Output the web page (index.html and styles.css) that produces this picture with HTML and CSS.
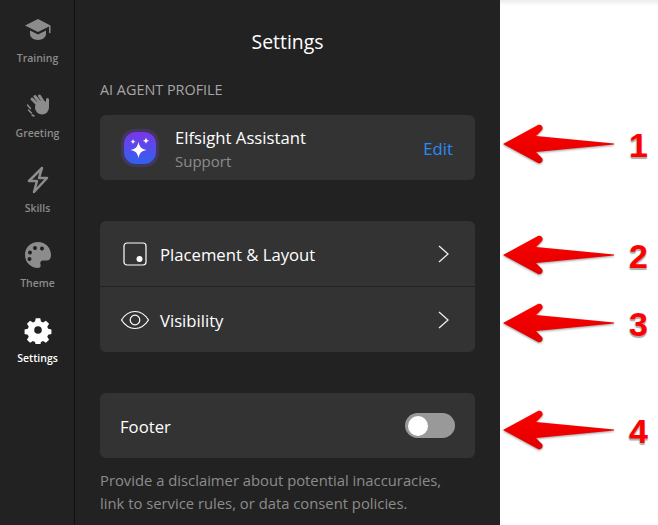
FILE: index.html
```html
<!DOCTYPE html>
<html lang="en">
	<head>
		<meta charset="UTF-8" />
		<title>Settings</title>
		<link rel="stylesheet" href="styles.css">
	</head>
	<body>
		<nav class="sidebar">
			<div class="nav-item">
				<svg class="nav-icon" viewBox="0 0 28 28"><path d="M14 3 1 9.500 14 16l11-5.500V17h1.500V9.500z"/><path d="M6 14.500V18c0 3 3.500 6 8 6s8-3 8-6v-3.500l-8 4z"/></svg>
				<span>Training</span>
			</div>
			<div class="nav-item">
				<svg class="nav-icon" viewBox="0 0 28 28"><circle cx="18" cy="16.500" r="7"/><path d="M15 15 8 8M17 13l-6-7.500M20 12l-4.500-7M23.500 15V8.500" fill="none" stroke="#8c8c8c" stroke-width="3" stroke-linecap="round"/><path d="M3.500 14l3 3.500M4.500 19l3 3M8 24l2 1" fill="none" stroke="#8c8c8c" stroke-width="1.500" stroke-linecap="round"/></svg>
				<span>Greeting</span>
			</div>
			<div class="nav-item">
				<svg class="nav-icon" viewBox="0 0 28 28"><path d="M18 2 5 15h8l-3 11 13-14h-8z" fill="none" stroke="#8c8c8c" stroke-width="2.500" stroke-linejoin="round"/></svg>
				<span>Skills</span>
			</div>
			<div class="nav-item">
				<svg class="nav-icon" viewBox="0 0 28 28"><path fill-rule="evenodd" d="M14 1C6.500 1 1 6.500 1 14s6 13 13 13c2.500 0 3-2 2.500-3.500-.8-2 .3-4 2.500-4h3.500c2.800 0 4.500-2 4.500-5C27 6.500 21.500 1 14 1zM8 11.500a2 2 0 1 0 0 .1zM13 7a2 2 0 1 0 0 .1zM20 7.500a2 2 0 1 0 0 .1zM7.500 18a2 2 0 1 0 0 .1z"/></svg>
				<span>Theme</span>
			</div>
			<div class="nav-item active">
				<svg class="nav-icon" viewBox="0 0 28 28"><path fill-rule="evenodd" d="M11.500 1h5l.8 3.600 2.300 1 3.200-2 3.500 3.500-2 3.200 1 2.300 3.600.8v5l-3.600.8-1 2.300 2 3.200-3.500 3.500-3.200-2-2.300 1-.8 3.600h-5l-.8-3.600-2.300-1-3.200 2-3.500-3.500 2-3.200-1-2.300-3.600-.8v-5l3.600-.8 1-2.300-2-3.200 3.500-3.500 3.200 2 2.300-1z" transform="translate(1.400 1.400) scale(.9)"/><circle cx="14" cy="14" r="3.800" fill="#222"/></svg>
				<span>Settings</span>
			</div>
		</nav>

		<main class="panel">
			<h1 class="panel-title">Settings</h1>
			<h2 class="section-label">AI AGENT PROFILE</h2>
			<div class="card profile">
				<div class="avatar">
					<svg viewBox="0 0 40 40">
						<defs><linearGradient id="av" x1="0" y1="0" x2="0" y2="1"><stop offset="0" stop-color="#7b35e8"/><stop offset="1" stop-color="#2f62ee"/></linearGradient></defs>
						<rect x="1" y="1" width="38" height="38" rx="14" fill="#5b3ea8" opacity=".35"/>
						<rect x="4" y="4" width="32" height="32" rx="12" fill="url(#av)"/>
						<path d="M18.500 13.500c.9 5.500 2.800 7.600 8 8.500-5.200.9-7.100 3-8 8.500-.9-5.500-2.800-7.600-8-8.500 5.200-.9 7.100-3 8-8.500z" fill="#fff"/>
						<path d="M13 11c.3 1.700 1 2.400 2.700 2.700-1.700.3-2.400 1-2.700 2.700-.3-1.700-1-2.400-2.700-2.700 1.700-.3 2.400-1 2.700-2.700zM26 9.500c.4 2.100 1.200 2.900 3.300 3.300-2.100.4-2.900 1.200-3.300 3.300-.4-2.100-1.200-2.900-3.300-3.300 2.100-.4 2.900-1.200 3.300-3.300z" fill="#fff"/>
					</svg>
				</div>
				<div class="profile-text">
					<div class="profile-name">Elfsight Assistant</div>
					<div class="profile-role">Support</div>
				</div>
				<a class="edit-link">Edit</a>
			</div>

			<div class="card menu">
				<div class="menu-row">
					<svg class="row-icon" viewBox="0 0 24 24"><rect x="1" y="1" width="22" height="22" rx="3" fill="none" stroke="#fff" stroke-width="1.200"/><circle cx="16.500" cy="17" r="3" fill="#fff"/></svg>
					<span class="row-label">Placement &amp; Layout</span>
					<svg class="chevron" viewBox="0 0 12 18"><path d="M2 1l9 8-9 8" fill="none" stroke="#eee" stroke-width="1.300"/></svg>
				</div>
				<div class="menu-row">
					<svg class="row-icon eye" viewBox="0 0 30 20"><path d="M1.500 10C5 4.500 9.500 1.500 15 1.500S25 4.500 28.500 10C25 15.500 20.500 18.500 15 18.500S5 15.500 1.500 10z" fill="none" stroke="#fff" stroke-width="1.200"/><circle cx="15" cy="10" r="4.800" fill="none" stroke="#fff" stroke-width="1.200"/></svg>
					<span class="row-label">Visibility</span>
					<svg class="chevron" viewBox="0 0 12 18"><path d="M2 1l9 8-9 8" fill="none" stroke="#eee" stroke-width="1.300"/></svg>
				</div>
			</div>

			<div class="card footer-card">
				<span class="row-label">Footer</span>
				<div class="toggle"><div class="toggle-knob"></div></div>
			</div>
			<p class="hint">Provide a disclaimer about potential inaccuracies, link to service rules, or data consent policies.</p>
		</main>

		<div class="preview"></div>

		<div class="callout callout-1">
			<svg class="arrow" viewBox="0 0 114 42"><defs><linearGradient id="red" x1="0" y1="0" x2="0" y2="1"><stop offset="0" stop-color="#ff0000"/><stop offset="1" stop-color="#e00000"/></linearGradient></defs><path d="M1 21 36 2c3-1.500 6 2 4 5l-6 6 78 7.500v1l-78 7.500 6 6c2 3-1 6-4 5z" fill="url(#red)"/></svg>
			<span class="callout-num">1</span>
		</div>
		<div class="callout callout-2">
			<svg class="arrow" viewBox="0 0 114 42"><path d="M1 21 36 2c3-1.500 6 2 4 5l-6 6 78 7.500v1l-78 7.500 6 6c2 3-1 6-4 5z" fill="url(#red)"/></svg>
			<span class="callout-num">2</span>
		</div>
		<div class="callout callout-3">
			<svg class="arrow" viewBox="0 0 114 42"><path d="M1 21 36 2c3-1.500 6 2 4 5l-6 6 78 7.500v1l-78 7.500 6 6c2 3-1 6-4 5z" fill="url(#red)"/></svg>
			<span class="callout-num">3</span>
		</div>
		<div class="callout callout-4">
			<svg class="arrow" viewBox="0 0 114 42"><path d="M1 21 36 2c3-1.500 6 2 4 5l-6 6 78 7.500v1l-78 7.500 6 6c2 3-1 6-4 5z" fill="url(#red)"/></svg>
			<span class="callout-num">4</span>
		</div>
	</body>
</html>
```

FILE: styles.css
```css
html, body {
	height: 100%;
}
body {
	margin: 0;
	display: flex;
	overflow: hidden;
	position: relative;
	background: #fff;
	font-family: 'Open Sans', 'Noto Sans', sans-serif;
	color: #fff;
}
.sidebar {
	flex: 0 0 73px;
	background: #222;
	border-right: 1px solid #111;
	display: flex;
	flex-direction: column;
	padding: 16px 0 0 1px;
}
.nav-item {
	height: 75px;
	display: flex;
	flex-direction: column;
	align-items: center;
	color: #8c8c8c;
	font-size: 10.5px;
	font-weight: 600;
}
.nav-item span {
	margin-top: 7px;
	line-height: 14px;
}
.nav-icon {
	width: 28px;
	height: 28px;
	fill: #8c8c8c;
}
.nav-item.active {
	color: #fff;
}
.nav-item.active .nav-icon {
	fill: #fff;
}
.panel {
	flex: 0 0 425px;
	box-sizing: border-box;
	background: #222;
	padding: 0 25px;
}
.preview {
	flex: 1;
	background: linear-gradient(#ececec, #fff 6px);
}
.panel-title {
	margin: 30px 0 0;
	font-size: 19.4px;
	font-weight: 400;
	line-height: 24px;
	text-align: center;
}
.section-label {
	margin: 27px 0 0;
	font-size: 14.4px;
	font-weight: 400;
	line-height: 18px;
	color: #a6a6a6;
}
.card {
	background: #333;
	border-radius: 6px;
}
.profile {
	margin-top: 16px;
	height: 65px;
	display: flex;
	align-items: center;
	padding: 0 22px 0 20px;
}
.avatar {
	width: 40px;
	height: 40px;
}
.avatar svg {
	display: block;
	width: 40px;
	height: 40px;
}
.profile-text {
	flex: 1;
	margin-left: 15px;
	padding-top: 2px;
}
.profile-name {
	font-size: 16.7px;
	line-height: 24px;
}
.profile-role {
	font-size: 15px;
	line-height: 22px;
	color: #8c8c8c;
}
.edit-link {
	font-size: 16.7px;
	color: #2a8af5;
	padding-top: 2px;
}
.menu {
	margin-top: 41px;
}
.menu-row {
	height: 65px;
	display: flex;
	align-items: center;
	padding: 0 26px 0 20px;
}
.menu-row + .menu-row {
	border-top: 1px solid #222;
}
.row-icon {
	width: 24px;
	height: 24px;
	margin-left: 3px;
	margin-right: 13px;
}
.row-icon.eye {
	width: 30px;
	height: 20px;
	margin-left: 0;
	margin-right: 10px;
}
.row-label {
	flex: 1;
	font-size: 16.7px;
	padding-top: 2px;
}
.chevron {
	width: 12px;
	height: 18px;
}
.footer-card {
	margin-top: 41px;
	height: 65px;
	display: flex;
	align-items: center;
	padding: 0 20px;
}
.toggle {
	width: 50px;
	height: 25px;
	border-radius: 13px;
	background: #999;
	display: flex;
	align-items: center;
	padding-left: 3px;
	box-sizing: border-box;
}
.toggle-knob {
	width: 20px;
	height: 20px;
	border-radius: 50%;
	background: #fff;
}
.hint {
	margin: 11px 0 0;
	max-width: 350px;
	font-size: 14.8px;
	line-height: 23px;
	color: #8c8c8c;
}
.callout {
	position: absolute;
	left: 502px;
	width: 156px;
	height: 44px;
}
.callout-1 { top: 123px; }
.callout-2 { top: 234px; }
.callout-3 { top: 302px; }
.callout-4 { top: 409px; }
.arrow {
	position: absolute;
	left: 0;
	top: 0;
	width: 114px;
	height: 42px;
	filter: drop-shadow(0 1px 1px rgba(0, 0, 0, 0.4));
}
.callout-num {
	position: absolute;
	left: 127px;
	top: 0;
	font-family: 'Liberation Sans', sans-serif;
	font-size: 34px;
	font-weight: 700;
	line-height: 44px;
	color: #f00;
	-webkit-text-stroke: 4px #fff;
	paint-order: stroke fill;
	text-shadow: 0 2px 1px #aaa, -1px 1px 1px #ccc;
}
```
